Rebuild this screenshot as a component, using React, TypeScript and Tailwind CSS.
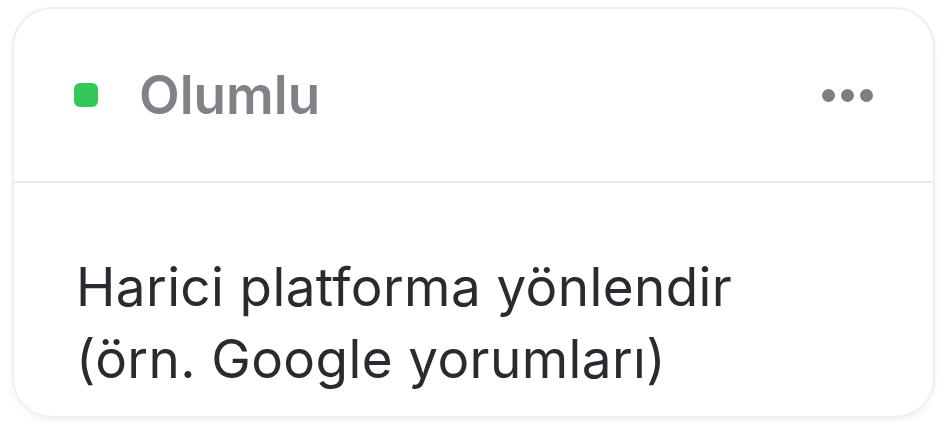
import React from "react";

export default function App() {
  return (
    <div className="w-[947px] h-[434px] bg-white pt-[7px] px-[12px]" style={{ fontFamily: "Inter, 'Noto Sans', sans-serif" }}>
      <div className="flex flex-col w-[923px] h-[411px] rounded-[40px] border-2 border-[#efefef] bg-white shadow-[0_3px_6px_rgba(0,0,0,0.05)] overflow-hidden">
        <div className="flex items-center h-[172px] pl-[60px] pr-[60px] shrink-0">
          <div className="w-[24px] h-[24px] rounded-[6px] bg-[#34c759]" />
          <div className="ml-[41px] text-[53px] leading-none font-semibold text-[#838188] tracking-[0px]">Olumlu</div>
          <div className="ml-auto flex items-center gap-[6px]">
            <span className="w-[13px] h-[13px] rounded-full bg-[#7e7c84]" />
            <span className="w-[13px] h-[13px] rounded-full bg-[#7e7c84]" />
            <span className="w-[13px] h-[13px] rounded-full bg-[#7e7c84]" />
          </div>
        </div>
        <div className="h-[2px] bg-[#e9e9e9] shrink-0" />
        <div className="pl-[62px] pt-[68px] text-[53px] leading-[72px] text-[#2b2a30] tracking-[0.4px]">
          Harici platforma yönlendir
          <br />
          (örn. Google yorumları)
        </div>
      </div>
    </div>
  );
}
